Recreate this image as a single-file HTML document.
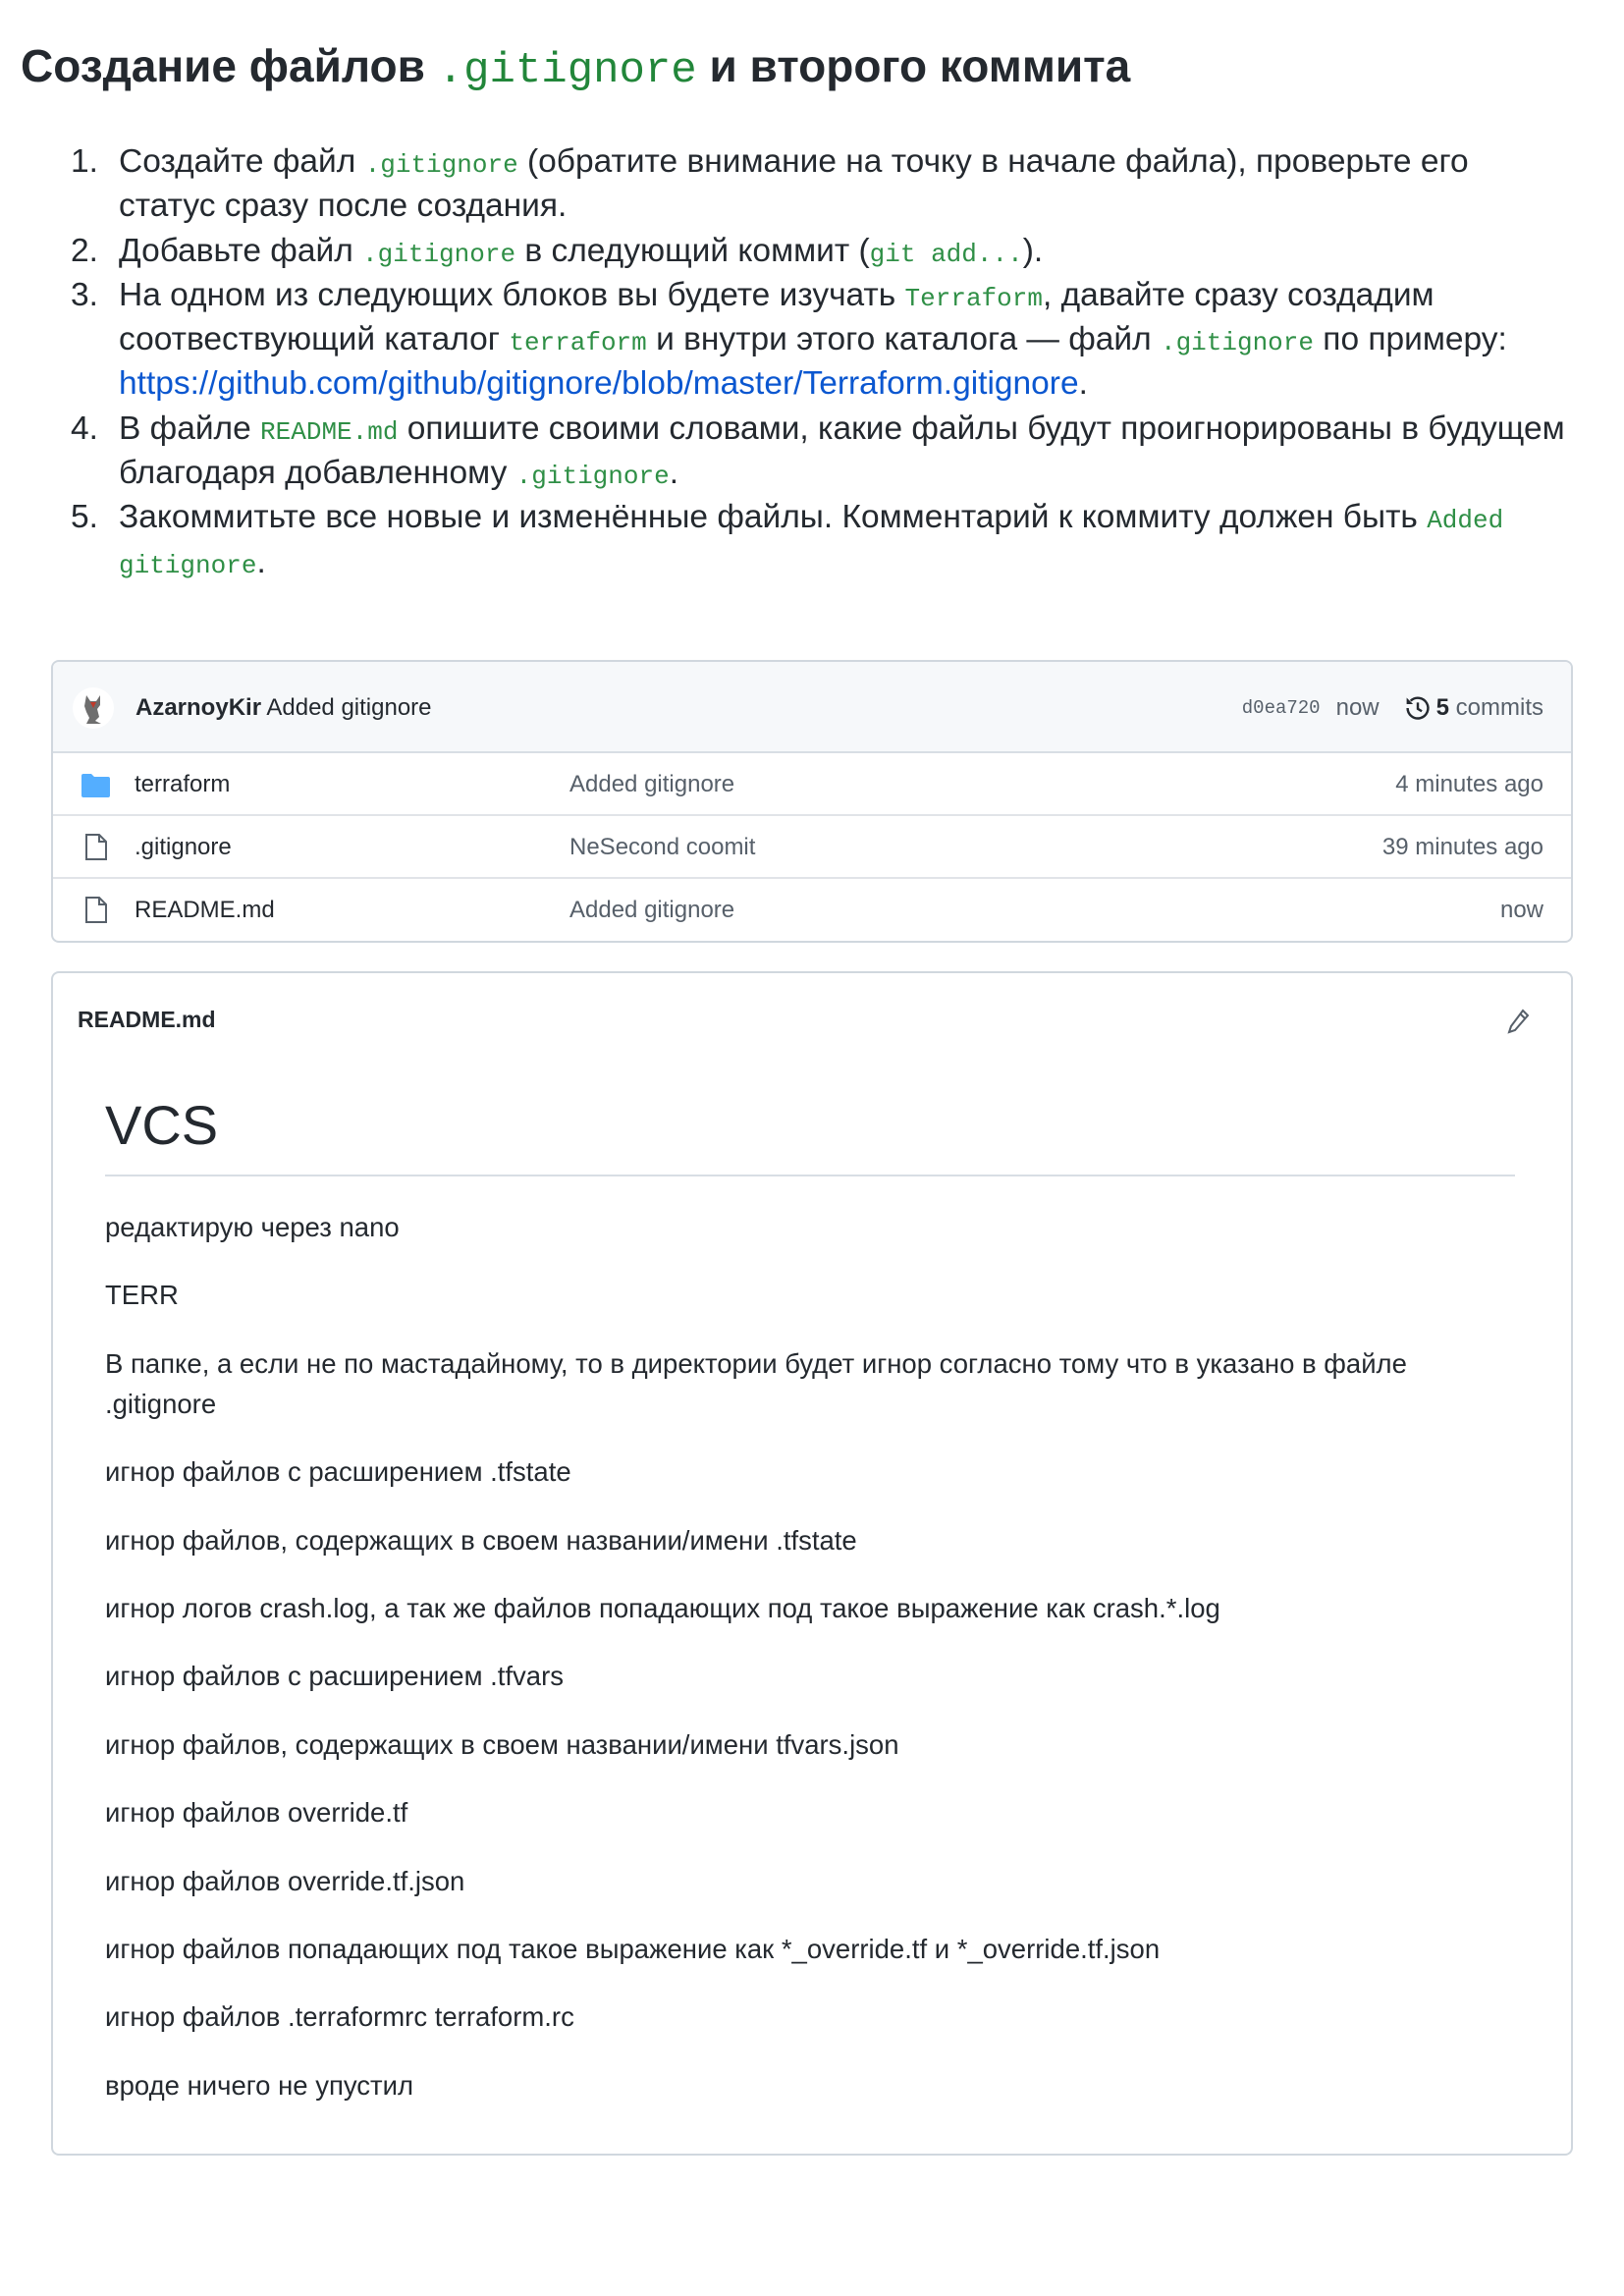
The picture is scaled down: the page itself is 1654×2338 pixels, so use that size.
<!DOCTYPE html>
<html><head><meta charset="utf-8"><style>
*{margin:0;padding:0;box-sizing:border-box}
body{width:1654px;height:2338px;background:#fff;font-family:"Liberation Sans","Noto Sans CJK SC",sans-serif;color:#24292f;position:relative;overflow:hidden}
h1{position:absolute;left:21px;top:39px;font-size:46px;font-weight:bold;line-height:56px;white-space:nowrap}
h1 code{font-family:"Liberation Mono",monospace;color:#22863a;font-weight:normal;font-size:44px;line-height:0}
code{font-family:"Liberation Mono",monospace;color:#2f8f46;font-size:26px;line-height:0}
ol{position:absolute;left:72px;top:142px;width:1524px;list-style:none;font-size:33.5px;line-height:45.3px}
ol li{position:relative;padding-left:49px}
ol li span.n{position:absolute;left:0;top:0}
a{color:#0b57d0;text-decoration:none}
.card{position:absolute;left:52px;width:1550px;border:2px solid #d0d7de;border-radius:8px;background:#fff;overflow:hidden}
.hdr{height:93px;background:#f6f8fa;border-bottom:2px solid #d8dee4;position:relative;font-size:24px}
.row{height:64px;border-bottom:2px solid #e1e4e8;position:relative;font-size:24px}
.row:last-child{border-bottom:none}
.abs{position:absolute;white-space:nowrap}
.g{color:#57606a}
.md{font-family:"Liberation Sans","DejaVu Sans",sans-serif}
.md p{font-size:27.5px;line-height:41px;margin-bottom:28.4px;color:#24292f}
</style></head><body>
<h1>Создание файлов <code>.gitignore</code> и второго коммита</h1>
<ol>
<li><span class="n">1.</span>Создайте файл <code>.gitignore</code> (обратите внимание на точку в начале файла), проверьте его статус сразу после создания.</li>
<li><span class="n">2.</span>Добавьте файл <code>.gitignore</code> в следующий коммит (<code>git add...</code>).</li>
<li><span class="n">3.</span>На одном из следующих блоков вы будете изучать <code>Terraform</code>, давайте сразу создадим соотвествующий каталог <code>terraform</code> и внутри этого каталога — файл <code>.gitignore</code> по примеру: <a>https://github.com/github/gitignore/blob/master/Terraform.gitignore</a>.</li>
<li><span class="n">4.</span>В файле <code>README.md</code> опишите своими словами, какие файлы будут проигнорированы в будущем благодаря добавленному <code>.gitignore</code>.</li>
<li><span class="n">5.</span>Закоммитьте все новые и изменённые файлы. Комментарий к коммиту должен быть <code>Added gitignore</code>.</li>
</ol>

<div class="card" style="top:672px;height:288px">
 <div class="hdr">
  <svg class="abs" style="left:20px;top:26px" width="42" height="42" viewBox="0 0 42 42"><circle cx="21" cy="21" r="21" fill="#fff"/><path d="M14 8l4 6h6l4-6v10l-3 4 2 8-4 4 6 3H14l3-6-3-6-2-6z" fill="#6e6e6e"/><path d="M18 15l3 6 3-6z" fill="#c0392b"/></svg>
  <div class="abs" style="left:84px;top:33px"><span style="font-weight:bold;color:#24292f">AzarnoyKir</span> Added gitignore</div>
  <div class="abs" style="right:28px;top:33px;display:flex;align-items:center;gap:0">
   <span class="g" style="font-family:'Liberation Mono',monospace;font-size:19px">d0ea720</span>
   <span class="g" style="margin-left:16px">now</span>
   <svg style="margin-left:26px;margin-right:6px" width="26" height="26" viewBox="0 0 16 16"><path d="M1.6 8a6.4 6.4 0 1 0 1.9-4.5" fill="none" stroke="#24292f" stroke-width="1.5"/><path d="M1 1.5v4h4z" fill="#24292f"/><path d="M8 4.5v4l2.5 1.5" fill="none" stroke="#24292f" stroke-width="1.5"/></svg>
   <span><b>5</b> <span class="g">commits</span></span>
  </div>
 </div>
 <div class="row">
  <svg class="abs" style="left:29px;top:21px" width="29" height="24" viewBox="0 0 29 24"><path d="M0 2a2 2 0 0 1 2-2h8l3 3h14a2 2 0 0 1 2 2v17a2 2 0 0 1-2 2H2a2 2 0 0 1-2-2z" fill="#54aeff"/></svg>
  <div class="abs" style="left:83px;top:18px">terraform</div>
  <div class="abs g" style="left:526px;top:18px">Added gitignore</div>
  <div class="abs g" style="right:28px;top:18px">4 minutes ago</div>
 </div>
 <div class="row">
  <svg class="abs" style="left:32px;top:18px" width="24" height="28" viewBox="0 0 24 28"><path d="M2 1h13l7 7v18H2z" fill="none" stroke="#57606a" stroke-width="2"/><path d="M15 1v7h7" fill="none" stroke="#57606a" stroke-width="2"/></svg>
  <div class="abs" style="left:83px;top:18px">.gitignore</div>
  <div class="abs g" style="left:526px;top:18px">NeSecond coomit</div>
  <div class="abs g" style="right:28px;top:18px">39 minutes ago</div>
 </div>
 <div class="row">
  <svg class="abs" style="left:32px;top:18px" width="24" height="28" viewBox="0 0 24 28"><path d="M2 1h13l7 7v18H2z" fill="none" stroke="#57606a" stroke-width="2"/><path d="M15 1v7h7" fill="none" stroke="#57606a" stroke-width="2"/></svg>
  <div class="abs" style="left:83px;top:18px">README.md</div>
  <div class="abs g" style="left:526px;top:18px">Added gitignore</div>
  <div class="abs g" style="right:28px;top:18px">now</div>
 </div>
</div>

<div class="card md" style="top:989px;height:1206px">
 <div class="abs" style="left:25px;top:34px;font-size:23px;font-weight:bold;color:#24292f">README.md</div>
 <svg class="abs" style="left:1481px;top:36px" width="24" height="26" viewBox="0 0 24 26"><path d="M16 2l5 5L8 22l-6 2 2-6z" fill="none" stroke="#57606a" stroke-width="2"/><path d="M13 5l5 5" stroke="#57606a" stroke-width="2"/></svg>
 <div class="abs" style="left:53px;top:120px;font-size:56px;line-height:70px;color:#24292f">VCS</div>
 <div class="abs" style="left:53px;top:205px;width:1436px;height:2px;background:#d8dee4"></div>
 <div class="abs" style="left:53px;top:238px;width:1436px;white-space:normal">
  <p>редактирую через nano</p>
  <p>TERR</p>
  <p>В папке, а если не по мастадайному, то в директории будет игнор согласно тому что в указано в файле<br>.gitignore</p>
  <p>игнор файлов с расширением .tfstate</p>
  <p>игнор файлов, содержащих в своем названии/имени .tfstate</p>
  <p>игнор логов crash.log, а так же файлов попадающих под такое выражение как crash.*.log</p>
  <p>игнор файлов с расширением .tfvars</p>
  <p>игнор файлов, содержащих в своем названии/имени tfvars.json</p>
  <p>игнор файлов override.tf</p>
  <p>игнор файлов override.tf.json</p>
  <p>игнор файлов попадающих под такое выражение как *_override.tf и *_override.tf.json</p>
  <p>игнор файлов .terraformrc terraform.rc</p>
  <p>вроде ничего не упустил</p>
 </div>
</div>
</body></html>
